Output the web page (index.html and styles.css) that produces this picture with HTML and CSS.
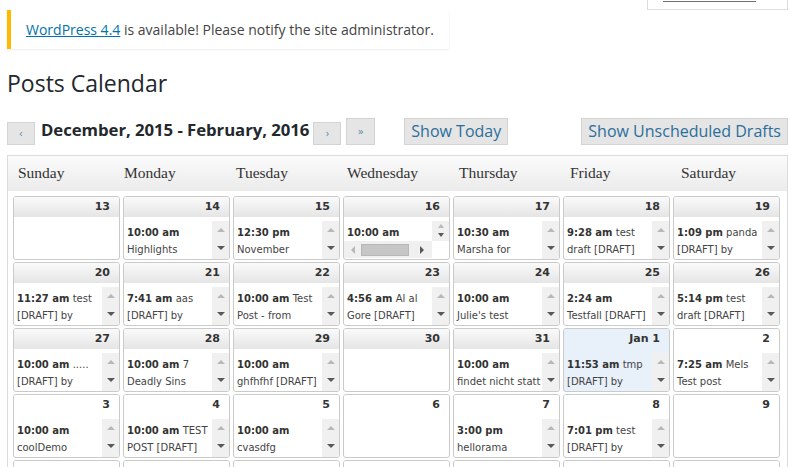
FILE: index.html
```html
<!DOCTYPE html>
<html>
<head>
<meta charset="utf-8">
<title>Posts Calendar</title>
<link rel="stylesheet" href="styles.css">
</head>
<body>
<div class="wrap">
  <div class="meta">
    <div class="meta-tab"><span class="meta-link"></span></div>
  </div>
  <div class="notice"><a href="#">WordPress 4.4</a> is available! Please notify the site administrator.</div>
  <h1 class="title">Posts Calendar</h1>
  <div class="nav">
    <span class="arrow-btn">&lsaquo;</span>
    <span class="range">December, 2015 - February, 2016</span>
    <span class="arrow-btn">&rsaquo;</span>
    <span class="arrow-btn tall">&raquo;</span>
    <span class="btn today-btn">Show Today</span>
    <span class="btn drafts-btn">Show Unscheduled Drafts</span>
  </div>
  <div class="calendar">
    <div class="days">
      <div>Sunday</div><div>Monday</div><div>Tuesday</div><div>Wednesday</div><div>Thursday</div><div>Friday</div><div>Saturday</div>
    </div>
    <div class="grid">
      <!-- row 1 -->
      <div class="cell"><div class="hd">13</div></div>
      <div class="cell"><div class="hd">14</div><div class="bd"><div class="posts"><div><b>10:00 am</b></div><div>Highlights</div></div><div class="sb"><i class="up"></i><i class="dn"></i></div></div></div>
      <div class="cell"><div class="hd">15</div><div class="bd"><div class="posts"><div><b>12:30 pm</b></div><div>November</div></div><div class="sb"><i class="up"></i><i class="dn"></i></div></div></div>
      <div class="cell"><div class="hd">16</div><div class="bd both"><div class="posts"><div><b>10:00 am</b></div></div><div class="vsb"><i class="up"></i><i class="dn"></i></div><div class="hsb"><i class="lt"></i><i class="thumb"></i><i class="rt"></i></div><div class="corner"></div></div></div>
      <div class="cell"><div class="hd">17</div><div class="bd"><div class="posts"><div><b>10:30 am</b></div><div>Marsha for</div></div><div class="sb"><i class="up"></i><i class="dn"></i></div></div></div>
      <div class="cell"><div class="hd">18</div><div class="bd"><div class="posts"><div><b>9:28 am</b> test</div><div>draft [DRAFT]</div></div><div class="sb"><i class="up"></i><i class="dn"></i></div></div></div>
      <div class="cell"><div class="hd">19</div><div class="bd"><div class="posts"><div><b>1:09 pm</b> panda</div><div>[DRAFT] by</div></div><div class="sb"><i class="up"></i><i class="dn"></i></div></div></div>
      <!-- row 2 -->
      <div class="cell"><div class="hd">20</div><div class="bd"><div class="posts"><div><b>11:27 am</b> test</div><div>[DRAFT] by</div></div><div class="sb"><i class="up"></i><i class="dn"></i></div></div></div>
      <div class="cell"><div class="hd">21</div><div class="bd"><div class="posts"><div><b>7:41 am</b> aas</div><div>[DRAFT] by</div></div><div class="sb"><i class="up"></i><i class="dn"></i></div></div></div>
      <div class="cell"><div class="hd">22</div><div class="bd"><div class="posts"><div><b>10:00 am</b> Test</div><div>Post - from</div></div><div class="sb"><i class="up"></i><i class="dn"></i></div></div></div>
      <div class="cell"><div class="hd">23</div><div class="bd"><div class="posts"><div><b>4:56 am</b> Al al</div><div>Gore [DRAFT]</div></div><div class="sb"><i class="up"></i><i class="dn"></i></div></div></div>
      <div class="cell"><div class="hd">24</div><div class="bd"><div class="posts"><div><b>10:00 am</b></div><div>Julie's test</div></div><div class="sb"><i class="up"></i><i class="dn"></i></div></div></div>
      <div class="cell"><div class="hd">25</div><div class="bd"><div class="posts"><div><b>2:24 am</b></div><div>Testfall [DRAFT]</div></div><div class="sb"><i class="up"></i><i class="dn"></i></div></div></div>
      <div class="cell"><div class="hd">26</div><div class="bd"><div class="posts"><div><b>5:14 pm</b> test</div><div>draft [DRAFT]</div></div><div class="sb"><i class="up"></i><i class="dn"></i></div></div></div>
      <!-- row 3 -->
      <div class="cell"><div class="hd">27</div><div class="bd"><div class="posts"><div><b>10:00 am</b> .....</div><div>[DRAFT] by</div></div><div class="sb"><i class="up"></i><i class="dn"></i></div></div></div>
      <div class="cell"><div class="hd">28</div><div class="bd"><div class="posts"><div><b>10:00 am</b> 7</div><div>Deadly Sins</div></div><div class="sb"><i class="up"></i><i class="dn"></i></div></div></div>
      <div class="cell"><div class="hd">29</div><div class="bd"><div class="posts"><div><b>10:00 am</b></div><div>ghfhfhf [DRAFT]</div></div><div class="sb"><i class="up"></i><i class="dn"></i></div></div></div>
      <div class="cell"><div class="hd">30</div></div>
      <div class="cell"><div class="hd">31</div><div class="bd"><div class="posts"><div><b>10:00 am</b></div><div>findet nicht statt</div></div><div class="sb"><i class="up"></i><i class="dn"></i></div></div></div>
      <div class="cell today"><div class="hd">Jan 1</div><div class="bd"><div class="posts"><div><b>11:53 am</b> tmp</div><div>[DRAFT] by</div></div><div class="sb"><i class="up"></i><i class="dn"></i></div></div></div>
      <div class="cell next"><div class="hd">2</div><div class="bd"><div class="posts"><div><b>7:25 am</b> Mels</div><div>Test post</div></div><div class="sb"><i class="up"></i><i class="dn"></i></div></div></div>
      <!-- row 4 -->
      <div class="cell next"><div class="hd">3</div><div class="bd"><div class="posts"><div><b>10:00 am</b></div><div>coolDemo</div></div><div class="sb"><i class="up"></i><i class="dn"></i></div></div></div>
      <div class="cell next"><div class="hd">4</div><div class="bd"><div class="posts"><div><b>10:00 am</b> TEST</div><div>POST [DRAFT]</div></div><div class="sb"><i class="up"></i><i class="dn"></i></div></div></div>
      <div class="cell next"><div class="hd">5</div><div class="bd"><div class="posts"><div><b>10:00 am</b></div><div>cvasdfg</div></div><div class="sb"><i class="up"></i><i class="dn"></i></div></div></div>
      <div class="cell next"><div class="hd">6</div></div>
      <div class="cell next"><div class="hd">7</div><div class="bd"><div class="posts"><div><b>3:00 pm</b></div><div>hellorama</div></div><div class="sb"><i class="up"></i><i class="dn"></i></div></div></div>
      <div class="cell next"><div class="hd">8</div><div class="bd"><div class="posts"><div><b>7:01 pm</b> test</div><div>[DRAFT] by</div></div><div class="sb"><i class="up"></i><i class="dn"></i></div></div></div>
      <div class="cell next"><div class="hd">9</div></div>
      <!-- row 5 (only the top edge is in view) -->
      <div class="cell next"><div class="hd"></div></div>
      <div class="cell next"><div class="hd"></div></div>
      <div class="cell next"><div class="hd"></div></div>
      <div class="cell next"><div class="hd"></div></div>
      <div class="cell next"><div class="hd"></div></div>
      <div class="cell next"><div class="hd"></div></div>
      <div class="cell next"><div class="hd"></div></div>
    </div>
  </div>
</div>
</body>
</html>
```
FILE: styles.css
```css
* { box-sizing: border-box; }
html, body { margin: 0; background: #fff; }
body {
  width: 792px;
  height: 467px;
  overflow: hidden;
  font-family: "Open Sans", "Liberation Sans", sans-serif;
  color: #444;
}
.wrap { padding: 0 4px 0 7px; }

.meta { display: flex; justify-content: flex-end; }
.meta-tab {
  width: 141px;
  height: 10px;
  border: 1px solid #ddd;
  border-top: 0;
  background: #fff;
  padding: 1px 0 0 15px;
}
.meta-link {
  display: block;
  width: 93px;
  height: 1px;
  background: #707070;
}

.notice {
  width: fit-content;
  background: #fff;
  border-left: 4px solid #ffba00;
  box-shadow: 0 1px 2px rgba(0, 0, 0, 0.08);
  padding: 10px 15px;
  font-size: 14px;
  line-height: 19px;
  color: #444;
}
.notice a { color: #0073aa; text-decoration: underline; }

.title {
  margin: 20px 0 0;
  font-size: 23px;
  font-weight: 400;
  line-height: 29px;
  color: #23282d;
}

.nav {
  margin-top: 20px;
  height: 27px;
  display: flex;
  align-items: flex-end;
}
.arrow-btn {
  width: 28px;
  height: 23px;
  border: 1px solid #d3d3d3;
  background: #e5e5e5;
  color: #5b8fb5;
  font-size: 11px;
  line-height: 20px;
  text-align: center;
}
.arrow-btn.tall { width: 29px; height: 27px; line-height: 24px; margin-left: 5px; }
.range {
  margin: 0 4px 4px 6px;
  font-size: 16.75px;
  font-weight: 700;
  line-height: 23px;
  color: #23282d;
  letter-spacing: -0.05px;
}
.btn {
  height: 27px;
  padding: 0 6px;
  border: 1px solid #d3d3d3;
  background: #e5e5e5;
  color: #2c6e9b;
  font-size: 16px;
  line-height: 25px;
  white-space: nowrap;
}
.today-btn { margin-left: 29px; }
.drafts-btn { margin-left: auto; }

.calendar {
  margin-top: 10px;
  border: 1px solid #dcdcdc;
  background: #fff;
}
.days {
  display: grid;
  grid-template-columns: 106px 112px 111px 112px 111px 111px 1fr;
  height: 35px;
  padding-left: 10px;
  background: linear-gradient(#fbfbfb, #ebebeb);
  font-family: "Liberation Serif", serif;
  font-size: 15.5px;
  line-height: 33px;
  color: #333;
}
.grid {
  display: grid;
  grid-template-columns: repeat(7, 107px);
  grid-auto-rows: 64px;
  gap: 2px 3px;
  padding: 5px 0 0 5px;
}
.cell {
  border: 1px solid #cacaca;
  border-radius: 3px;
  background: #fff;
  overflow: hidden;
  display: flex;
  flex-direction: column;
}
.hd {
  height: 20px;
  flex: none;
  background: linear-gradient(#fafafa, #e5e5e5);
  text-align: right;
  padding-right: 9px;
  font: bold 11px/20px "DejaVu Sans", sans-serif;
  color: #333;
}
.cell.next .hd { background: #fff; }
.cell.today, .cell.today .hd { background: #e8f0fa; }

.bd {
  margin-top: 4px;
  height: 38px;
  display: flex;
}
.posts {
  flex: 1;
  min-width: 0;
  overflow: hidden;
  padding: 3px 0 0 3px;
  font: 10px/17px "DejaVu Sans", sans-serif;
  color: #444;
  white-space: nowrap;
}
.posts b { color: #333; }
.sb {
  width: 17px;
  flex: none;
  background: #f0f0f0;
  display: flex;
  flex-direction: column;
  align-items: center;
  justify-content: space-between;
  padding: 7px 0 9px;
}
.up, .dn, .lt, .rt { display: block; width: 0; height: 0; }
.up { border-left: 4px solid transparent; border-right: 4px solid transparent; border-bottom: 4px solid #b8b8b8; }
.dn { border-left: 4px solid transparent; border-right: 4px solid transparent; border-top: 4px solid #585858; }
.lt { border-top: 4px solid transparent; border-bottom: 4px solid transparent; border-right: 4px solid #b8b8b8; }
.rt { border-top: 4px solid transparent; border-bottom: 4px solid transparent; border-left: 4px solid #585858; }

.bd.both {
  display: grid;
  grid-template-columns: 1fr 17px;
  grid-template-rows: 20px 17px;
}
.vsb {
  background: #f0f0f0;
  display: flex;
  flex-direction: column;
  align-items: center;
  justify-content: space-between;
  padding: 3px 0 4px;
}
.vsb .up, .vsb .dn { border-left-width: 3px; border-right-width: 3px; }
.hsb {
  background: #f0f0f0;
  display: flex;
  align-items: center;
  padding-left: 7px;
}
.thumb {
  display: block;
  width: 48px;
  height: 12px;
  margin: 0 11px 0 6px;
  background: #c6c6c6;
  border: 1px solid #b7b7b7;
}
.corner { background: #fff; }
```
